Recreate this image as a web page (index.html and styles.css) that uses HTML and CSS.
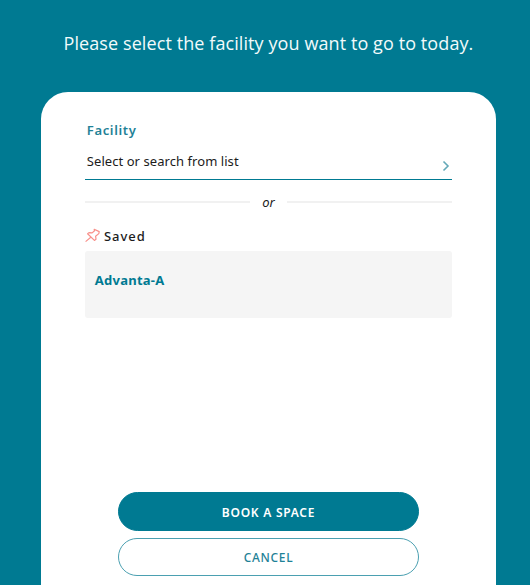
FILE: index.html
```html
<!DOCTYPE html>
<html lang="en">
<head>
<meta charset="utf-8">
<title>Select facility</title>
<link rel="stylesheet" href="styles.css">
</head>
<body>
<h1 class="title">Please select the facility you want to go to today.</h1>
<main class="card">
  <label class="label">Facility</label>
  <div class="select">
    <span class="select-text">Select or search from list</span>
    <svg class="chevron" viewBox="0 0 8 12"><path d="M1.5 1.5 6 6 1.5 10.5"/></svg>
  </div>
  <div class="divider"><span class="or">or</span></div>
  <div class="saved">
    <svg class="pin" viewBox="0 0 16 16"><path d="M9.2 1.3 14.2 3.6 13.8 5.6 10.6 8.2 11 11.2 9.4 12.4 2.6 5.8 4 4.6 7.2 4.9 9.5 2.8ZM5.8 9.3 0.6 13.6"/></svg>
    <span class="saved-text">Saved</span>
  </div>
  <div class="facility"><span class="facility-name">Advanta-A</span></div>
  <div class="actions">
    <button class="btn primary"><span class="book">BOOK A SPACE</span></button>
    <button class="btn"><span class="cancel">CANCEL</span></button>
  </div>
</main>
</body>
</html>
```

FILE: styles.css
```css
* { box-sizing: border-box; }
html, body { height: 100%; }
body {
  margin: 0;
  overflow: hidden;
  background: #007a92;
  font-family: "Noto Sans", "Open Sans", sans-serif;
  font-size: 13px;
  color: #1c1c1c;
}
.title {
  margin: 0;
  height: 92px;
  padding: 30px 0 0 63.5px;
  color: #f2fafb;
  font: 400 18px/26px "Open Sans", sans-serif;
  letter-spacing: 0.09px;
  white-space: nowrap;
}
.card {
  display: flex;
  flex-direction: column;
  width: 455.5px;
  height: 520px;
  margin-left: 40.5px;
  padding: 28px 44px 0 44.5px;
  border-radius: 27px 27px 0 0;
  background: #fff;
}
.label {
  height: 20px;
  padding-left: 1.8px;
  color: #1f8297;
  font-weight: 600;
  line-height: 20px;
  letter-spacing: 0.65px;
}
.select {
  display: flex;
  justify-content: space-between;
  height: 40px;
  padding: 11px 2px 0 1.8px;
  border-bottom: 1px solid #007a92;
  line-height: 20px;
  letter-spacing: 0.06px;
}
.chevron {
  width: 8px;
  height: 12px;
  margin-top: 9px;
  fill: none;
  stroke: #64a9b8;
  stroke-width: 1.6;
}
.divider {
  display: flex;
  align-items: center;
  gap: 12px;
  height: 44px;
}
.divider::before, .divider::after {
  content: "";
  flex: 1;
  height: 2px;
  background: #f1f1f1;
}
.or { font-style: italic; line-height: 20px; }
.saved {
  display: flex;
  align-items: center;
  gap: 3px;
  height: 27px;
  padding-bottom: 4px;
  font-weight: 500;
  letter-spacing: 0.95px;
}
.pin {
  width: 16px;
  height: 16px;
  fill: none;
  stroke: #f8908a;
  stroke-width: 1.2;
  stroke-linejoin: round;
}
.facility {
  height: 67px;
  padding: 19px 9.8px;
  border-radius: 3px;
  background: #f5f5f5;
  color: #007a92;
  font-weight: 700;
  line-height: 20px;
  letter-spacing: 0.25px;
}
.actions {
  display: flex;
  flex-direction: column;
  gap: 7px;
  margin: 174px 33px 0;
}
.btn {
  height: 38.5px;
  padding: 2px 0 0;
  border: 1.5px solid #4ba0b1;
  border-radius: 20px;
  background: #fff;
  color: #1f8297;
  font: 500 12px/20px "Noto Sans", sans-serif;
  letter-spacing: 0.7px;
}
.primary {
  padding-top: 3px;
  border-color: #007a92;
  background: #007a92;
  color: #fff;
  font-weight: 600;
  letter-spacing: 0.75px;
}
```
